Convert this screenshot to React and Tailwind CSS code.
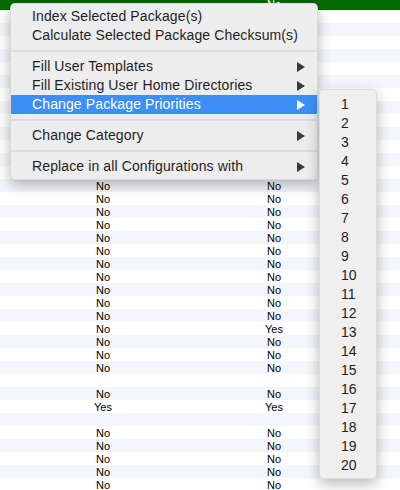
import React from "react";

const rowsBelow = [
  ["No", "No"], ["No", "No"], ["No", "No"], ["No", "No"], ["No", "No"], ["No", "No"],
  ["No", "No"], ["No", "No"], ["No", "No"], ["No", "No"], ["No", "No"], ["No", "Yes"],
  ["No", "No"], ["No", "No"], ["No", "No"], ["", ""], ["No", "No"], ["Yes", "Yes"],
  ["", ""], ["No", "No"], ["No", "No"], ["No", "No"], ["No", "No"], ["No", "No"],
];

const rows = [...Array(13).fill(["", ""]), ...rowsBelow];

function Arrow({ white }) {
  return (
    <svg width="8" height="10" viewBox="0 0 8 10" className="shrink-0">
      <path d="M0 0 L8 5 L0 10 Z" fill={white ? "#ffffff" : "#3a3a3a"} />
    </svg>
  );
}

function Item({ label, arrow, active }) {
  return (
    <div
      className={
        "h-[19px] flex items-center pl-[21px] pr-[12px] " +
        (active ? "bg-[#3d8ef7] text-white" : "text-[#1e1e1e]")
      }
    >
      <span className="flex-1 whitespace-nowrap">{label}</span>
      {arrow && <Arrow white={active} />}
    </div>
  );
}

function Sep() {
  return (
    <div className="h-[12px] flex items-center">
      <div className="h-[2px] w-full bg-[#dcdcdc]" />
    </div>
  );
}

export default function App() {
  return (
    <div className="relative w-[400px] h-[490px] overflow-hidden bg-white font-['Liberation_Sans',Arial,sans-serif]">
      <div className="-mt-[3px] flex flex-col text-[11px] leading-[13px] text-black">
        <div className="h-[13px] flex bg-[#046a04] text-white">
          <div className="w-[206px] text-center pt-[1px]"></div>
          <div className="w-[136px] text-center pt-[1px]">No</div>
        </div>
        {rows.map((r, i) => (
          <div
            key={i}
            className={"h-[13px] flex " + (i % 2 === 1 ? "bg-[#f3f6fa]" : "bg-white")}
          >
            <div className="w-[206px] text-center pt-[1px]">{r[0]}</div>
            <div className="w-[136px] text-center pt-[1px]">{r[1]}</div>
          </div>
        ))}
      </div>

      <div className="absolute left-[10px] top-[3px] w-[308px] py-[3px] rounded-[5px] bg-[#ededed] border border-[rgba(0,0,0,0.08)] shadow-[0_5px_14px_rgba(0,0,0,0.28)] text-[14px] leading-[19px] tracking-[0.12px]">
        <Item label="Index Selected Package(s)" />
        <Item label="Calculate Selected Package Checksum(s)" />
        <Sep />
        <Item label="Fill User Templates" arrow />
        <Item label="Fill Existing User Home Directories" arrow />
        <Item label="Change Package Priorities" arrow active />
        <Sep />
        <Item label="Change Category" arrow />
        <Sep />
        <Item label="Replace in all Configurations with" arrow />
      </div>

      <div className="absolute left-[319px] top-[89px] w-[58px] pt-[5px] pb-[3px] rounded-[5px] bg-[#efefef] border border-[rgba(0,0,0,0.08)] shadow-[0_5px_14px_rgba(0,0,0,0.28)] text-[14px] leading-[19px] text-[#1e1e1e]">
        {Array.from({ length: 20 }, (_, i) => (
          <div key={i} className="h-[19px] pl-[21px]">
            {i + 1}
          </div>
        ))}
      </div>
    </div>
  );
}
